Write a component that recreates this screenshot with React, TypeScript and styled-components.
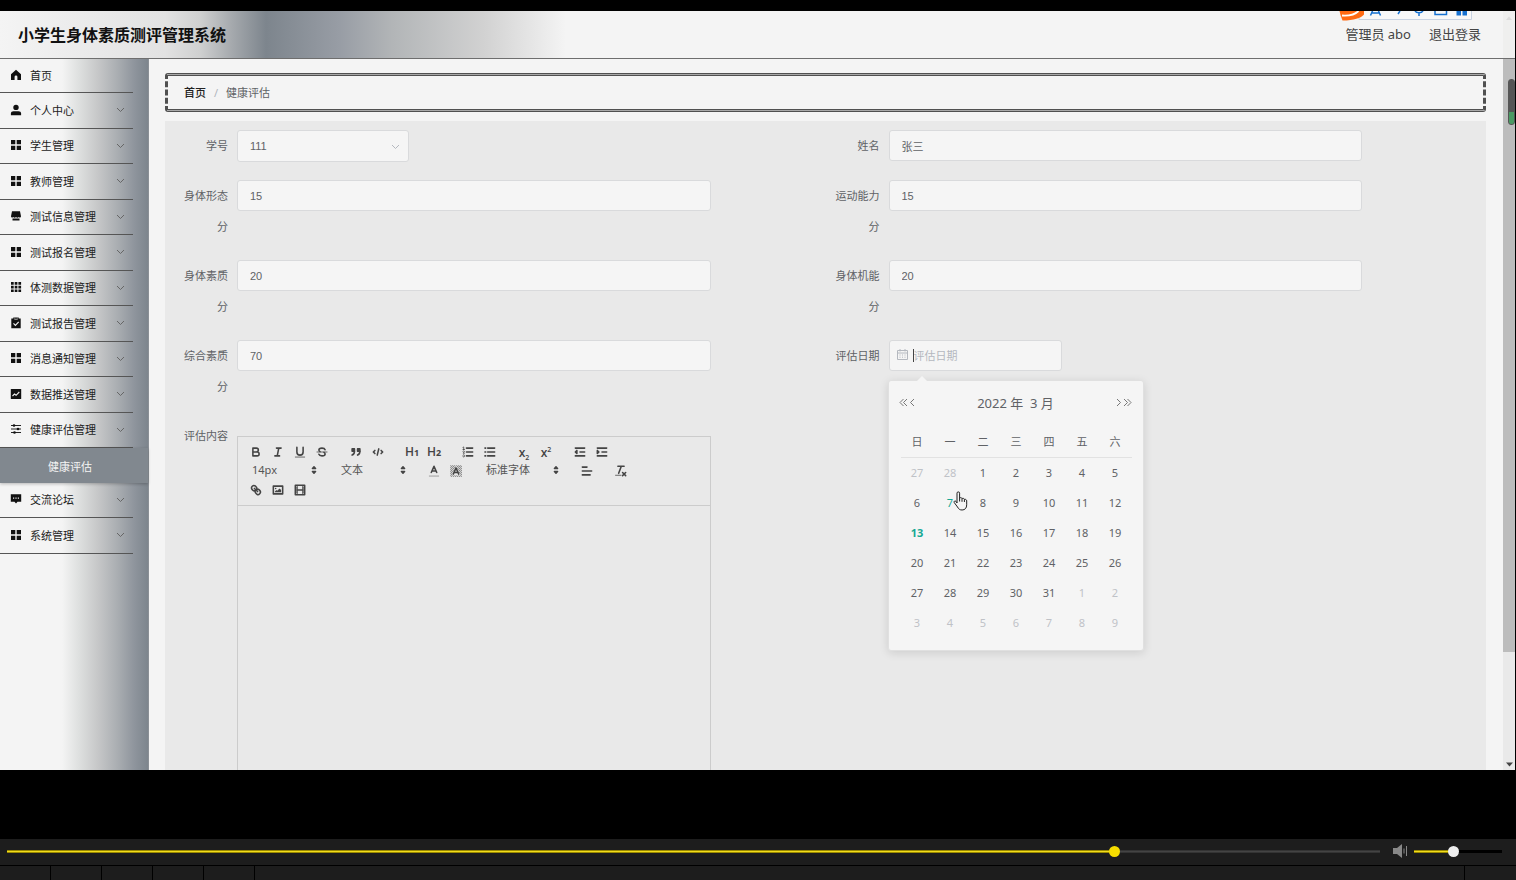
import React from "react";
import styled, { createGlobalStyle, css } from "styled-components";

const sans = `"Noto Sans", "Noto Sans CJK SC", sans-serif`;
const arial = `"Liberation Sans", "Noto Sans CJK SC", sans-serif`;

const Global = createGlobalStyle`
  *, *::before, *::after { box-sizing: border-box; }
  body { margin: 0; background: #000; font-family: ${sans}; font-size: 11px; color: #606266; }
  button, input, select { font: inherit; color: inherit; margin: 0; }
  ul { list-style: none; margin: 0; padding: 0; }
`;

const Page = styled.div`
  height: 100vh;
  display: flex;
  flex-direction: column;
  padding-top: 11px;
  background: #000;
`;

const Screen = styled.div`
  position: relative;
  flex: 1;
  min-height: 0;
  margin: 0 1px 69px 0;
  display: flex;
  flex-direction: column;
  overflow: hidden;
  background: #f4f4f4;
`;

/* ---------- header ---------- */

const Header = styled.header`
  height: 48px;
  flex: none;
  display: flex;
  align-items: center;
  justify-content: space-between;
  padding: 0 34px 2px 18px;
  border-bottom: 1px solid #6e6e6e;
  background: linear-gradient(
    to right,
    #f4f4f4 0,
    #e2e2e2 165px,
    #cfd0d0 200px,
    #a5a9ad 232px,
    #7d858d 266px,
    #989da5 340px,
    #b2b5b7 392px,
    #d2d2d2 485px,
    #f4f4f4 566px
  );
`;

const Title = styled.h1`
  margin: 0;
  font-size: 16px;
  font-weight: 700;
  color: #111;
`;

const UserNav = styled.nav`
  display: flex;
  gap: 18px;
  font-size: 13px;
  color: #444;
  a { color: inherit; text-decoration: none; }
`;

const ImeBar = styled.svg`
  position: absolute;
  top: 0;
  right: 42px;
`;

const RailTop = styled.svg`
  position: absolute;
  top: 0;
  right: 0;
`;

/* ---------- sidebar ---------- */

const Body = styled.div`
  flex: 1;
  min-height: 0;
  display: flex;
`;

const Sidebar = styled.aside`
  width: 149px;
  flex: none;
  border-right: 1px solid #8b9096;
  background: linear-gradient(
    to right,
    #f4f4f4 62px,
    #dfe1e0 78px,
    #c6c7c8 98px,
    #a9adb1 118px,
    #8f959d 134px,
    #7d858d 148px
  );
`;

const MenuItem = styled.li`
  height: 36px;
  width: 133px;
  border-bottom: 1px solid #555;
  &:nth-child(odd) { height: 35px; }
  &:first-child { height: 34px; }
`;

const MenuButton = styled.button`
  width: 100%;
  height: 100%;
  display: flex;
  align-items: center;
  gap: 8px;
  padding: 0 8px 2px 10px;
  border: 0;
  background: none;
  color: #222;
  text-align: left;
  span { flex: 1; white-space: nowrap; }
`;

const SubItem = styled.li`
  height: 35px;
  display: flex;
  align-items: center;
  padding-left: 48px;
  background: #81888f;
  box-shadow: 0 1px 3px rgba(0, 0, 0, 0.25);
  a { color: #f4f4f4; text-decoration: none; }
`;

/* ---------- content ---------- */

const Main = styled.main`
  flex: 1;
  min-width: 0;
  padding: 14px 17px 0 16px;
  display: flex;
  flex-direction: column;
  gap: 9px;
`;

const Crumbs = styled.nav`
  height: 39px;
  flex: none;
  display: flex;
  align-items: center;
  gap: 8px;
  padding: 0 16px 1px;
  border: 3px #505050;
  border-style: double dashed;
  border-radius: 3px;
  background:
    linear-gradient(#a8a8a8, #a8a8a8) top / 100% 3px no-repeat border-box,
    linear-gradient(#a8a8a8, #a8a8a8) bottom / 100% 3px no-repeat border-box;
  a { color: #222; font-weight: 500; text-decoration: none; }
  i { font-style: normal; color: #b0b4bc; }
`;

const Panel = styled.form`
  flex: 1;
  min-height: 0;
  display: grid;
  grid-template-columns: 1fr 1fr;
  align-content: start;
  row-gap: 18px;
  padding: 9px 9px 0;
  background: #e9e9e9;
`;

const Field = styled.div`
  position: relative;
  display: flex;
  align-items: flex-start;
  padding-right: 115px;
`;

const Label = styled.label`
  width: 63px;
  flex: none;
  padding-right: 9px;
  text-align: right;
  line-height: 31px;
`;

const box = css`
  height: 31px;
  border: 1px solid #d9dadc;
  border-radius: 3px;
  background: #f5f5f5;
  font-family: ${arial};
  outline: none;
`;

const TextInput = styled.input`
  ${box}
  flex: 1;
  min-width: 0;
  padding: 0 12px;
`;

const SelectWrap = styled.div`
  position: relative;
  width: 172px;
  select {
    ${box}
    height: 32px;
    width: 100%;
    padding: 0 12px;
    appearance: none;
  }
  svg { position: absolute; right: 9px; top: 12px; }
`;

const DateWrap = styled.div`
  position: relative;
  width: 173px;
  input {
    ${box}
    width: 100%;
    padding: 0 0 0 24px;
  }
  input::placeholder { color: #b4b8bf; opacity: 1; }
  > svg { position: absolute; left: 8px; top: 9px; }
`;

const Caret = styled.span`
  position: absolute;
  left: 24px;
  top: 9px;
  width: 1px;
  height: 13px;
  background: #444;
`;

/* ---------- calendar ---------- */

const Popup = styled.div`
  position: absolute;
  z-index: 2;
  left: -1px;
  top: 40px;
  width: 256px;
  height: 271px;
  padding: 0 12px;
  border: 1px solid #e0e0e0;
  border-radius: 3px;
  background: #f5f5f5;
  box-shadow: 0 2px 10px rgba(0, 0, 0, 0.12);
  &::before {
    content: "";
    position: absolute;
    left: 28px;
    top: -5px;
    border: 5px solid transparent;
    border-top: 0;
    border-bottom-color: #f5f5f5;
  }
`;

const CalHead = styled.div`
  height: 44px;
  display: flex;
  align-items: center;
  justify-content: space-between;
  padding-bottom: 2px;
  margin: 0 -2px;
  strong { font-size: 13px; font-weight: 400; white-space: pre; }
  div { display: flex; height: 20px; }
`;

const NavButton = styled.button`
  width: 9px;
  padding: 0;
  border: 0;
  background: none;
  display: grid;
  place-items: center;
`;

const CalTable = styled.table`
  width: 231px;
  table-layout: fixed;
  border-collapse: collapse;
  text-align: center;
  th { height: 32px; padding: 0; font-weight: 400; border-bottom: 1px solid #e2e2e2; }
`;

const Day = styled.td<{ $kind: "muted" | "hover" | "today" | "plain" }>`
  height: 30px;
  padding: 0;
  color: ${(p) => (p.$kind === "muted" ? "#bfc2c7" : p.$kind === "plain" ? "#606266" : "#16a893")};
  font-weight: ${(p) => (p.$kind === "today" ? 700 : 400)};
`;

const Hand = styled.svg`
  position: absolute;
  left: 64px;
  top: 110px;
`;

/* ---------- editor ---------- */

const Editor = styled.div`
  flex: 1;
  min-width: 0;
  margin-top: 16px;
  height: 480px;
  border: 1px solid #ccc;
`;

const Toolbar = styled.div`
  padding: 5px 7px 6px;
  border-bottom: 1px solid #ccc;
`;

const ToolRow = styled.div`
  display: flex;
  gap: 12px;
  height: 19px;
`;

const Group = styled.div`
  display: flex;
`;

const Tool = styled.button`
  width: 22px;
  height: 19px;
  padding: 0;
  border: 0;
  background: none;
  display: flex;
  align-items: center;
  justify-content: center;
  color: #444;
`;

const Glyph = styled.span`
  padding-top: 2px;
  font: 600 12px/14px "Open Sans", sans-serif;
  color: #444;
  small { font-size: 9px; font-weight: 700; }
  sub, sup { font-size: 7px; line-height: 0; }
`;

const Picker = styled.div<{ $w: number }>`
  position: relative;
  width: ${(p) => p.$w}px;
  select {
    width: 100%;
    height: 17px;
    padding: 0 7px;
    border: 0;
    background: none;
    appearance: none;
    color: #555;
  }
  svg { position: absolute; right: 1px; top: 2px; pointer-events: none; }
`;

/* ---------- scrollbar ---------- */

const ScrollRail = styled.div`
  position: relative;
  width: 12px;
  flex: none;
  display: flex;
  flex-direction: column;
  background: #e9e9e9;
`;

const ScrollThumb = styled.div`
  height: 593px;
  background: #bcbcbc;
`;

const ScrollArrow = styled.svg`
  margin: auto auto 3px;
`;

const Meter = styled.div`
  position: absolute;
  right: 0;
  top: 20px;
  width: 7px;
  height: 46px;
  border: 1px solid #555;
  border-radius: 3px;
  background: linear-gradient(#555 32px, #4b9a63 32px);
`;

/* ---------- player ---------- */

const Player = styled.footer`
  flex: none;
  background: #1d1d1d;
`;

const PlayerRow = styled.div`
  height: 26px;
  display: flex;
  align-items: center;
  padding: 0 14px 2px 7px;
`;

const Range = styled.input<{ $fill: string; $thumb: string; $rest: string }>`
  appearance: none;
  height: 12px;
  min-width: 0;
  background: none;
  &::-webkit-slider-runnable-track {
    height: 3px;
    background:
      linear-gradient(#9b8a00 1px, #f2dc1c 1px 2px, #9b8a00 2px) 0 0 / ${(p) => p.$fill} 100% no-repeat,
      ${(p) => p.$rest};
  }
  &::-webkit-slider-thumb {
    appearance: none;
    width: 11px;
    height: 11px;
    margin-top: -4px;
    border-radius: 50%;
    background: ${(p) => p.$thumb};
  }
`;

const Progress = styled(Range)`
  flex: 1;
`;

const Volume = styled(Range)`
  width: 88px;
`;

const Speaker = styled.svg`
  margin: 0 6px 0 13px;
`;

const Segments = styled.div`
  height: 15px;
  display: flex;
  border-top: 1px solid #000;
`;

const Segment = styled.div<{ $grow?: boolean }>`
  width: 51px;
  ${(p) => p.$grow && "flex: 1;"}
  border-right: 1px solid #000;
  &:last-child { border-right: 0; }
`;

/* ---------- icons ---------- */

const menuIcons: Record<string, React.ReactNode> = {
  home: <path d="M6 .8 1 5.2V11h3.600V7.800a1.400 1.400 0 0 1 2.800 0V11H11V5.200z" />,
  user: <><circle cx="6" cy="3.400" r="2.700" /><path d="M.9 11.200V9.600C.9 8 2 7.200 3.500 7.200h5C10 7.200 11.100 8 11.100 9.600v1.600z" /></>,
  menu: <path d="M1 1h4.300v4.300H1zM6.700 1H11v4.300H6.700zM1 6.700h4.300V11H1zM6.700 6.700H11V11H6.700z" />,
  shop: <path d="M2 1.200h8l1 5c0 1.300-1.500 1.800-2.200.8-.6 1-2.200 1-2.800 0-.6 1-2.200 1-2.800 0C2.500 8 1 7.500 1 6.200zM2.500 8.600h7v1.800h-7z" />,
  grid: <path d="M1 1h2.700v2.700H1zM4.700 1h2.700v2.700H4.700zM8.400 1h2.700v2.700H8.400zM1 4.700h2.700v2.700H1zM4.700 4.700h2.700v2.700H4.700zM8.400 4.700h2.700v2.700H8.400zM1 8.400h2.700v2.700H1zM4.700 8.400h2.700v2.700H4.700zM8.400 8.400h2.700v2.700H8.400z" />,
  claim: <><path d="M1.300 1.600h2V.6h1v2h3.400v-2h1v1h2V11.300H1.300z" /><path d="M4.300.5h3.400v1.300H4.300z" /><path d="m3.500 6.400 1.900 1.900 3.300-3.500" fill="none" stroke="#eee" strokeWidth="1.200" /></>,
  chart: <><rect x=".8" y="1" width="10.400" height="10" rx=".5" /><path d="m2.500 8 2-2 1.600 1.300 3.200-3.300" fill="none" stroke="#eee" strokeWidth="1.100" /></>,
  sliders: <><path d="M1 2.500h10M1 6h10M1 9.500h10" stroke="#222" fill="none" /><circle cx="4" cy="2.500" r="1.300" /><circle cx="8" cy="6" r="1.300" /><circle cx="4.500" cy="9.500" r="1.300" /></>,
  comment: <><path d="M.8 1.200h10.400v7.600H7.500L6 10.600 4.500 8.800H.8z" /><path d="M3 4.600h1.200v1.200H3zM5.400 4.600h1.200v1.200H5.400zM7.800 4.600H9v1.200H7.800z" fill="#eee" /></>,
};

const MenuIcon = ({ name }: { name: string }) => (
  <svg width="12" height="12" viewBox="0 0 12 12" fill="#111">{menuIcons[name]}</svg>
);

const Chevron = ({ color = "#666" }: { color?: string }) => (
  <svg width="9" height="9" viewBox="0 0 9 9" fill="none" stroke={color}><path d="m1 3 3.500 3.500L8 3" /></svg>
);

const toolIcons: Record<string, React.ReactNode> = {
  bold: <path d="M5 4h4.500a2.500 2.500 0 0 1 0 5H5zM5 9h5.500a2.500 2.500 0 0 1 0 5H5z" />,
  italic: <path d="M7 4h6M5 14h6M8 14l2-10" />,
  underline: <><path d="M5 3v6a4 4 0 0 0 8 0V3" /><path d="M3 15.500h12" strokeWidth="1" /></>,
  strike: <><path d="M2.500 9h13" strokeWidth="1" /><path d="M13 6C12.600 4.800 11 4 9 4 6.800 4 5 5 5 6.500c0 1 .5 1.500 1.500 2M5 12c.4 1.200 2 2 4 2 2.200 0 4-1 4-2.500 0-1-.5-1.500-1.500-2" /></>,
  quote: <><path d="M4 5h3v3H4zM11 5h3v3h-3z" fill="#444" /><path d="M7 8c0 4-3 5-3 5M14 8c0 4-3 5-3 5" /></>,
  code: <path d="M5 7 3 9l2 2M13 7l2 2-2 2M10 5 8 13" />,
  ordered: <><path d="M7 4h8M7 9h8M7 14h8" /><path d="m2.500 3 1-.5V6M2.500 5.800h2M4.500 10.500h-2c0-.3 1.900-1.100 1.900-2.200a1 1 0 0 0-1.900-.2M2.500 14.800a1 1 0 0 0 1.900-.1.700.700 0 0 0-.6-.7.700.700 0 0 0 .6-.7 1 1 0 0 0-1.900-.2" strokeWidth="1" /></>,
  bullet: <path d="M6 4h9M6 9h9M6 14h9M2.500 4h1M2.500 9h1M2.500 14h1" />,
  outdent: <><path d="M3 4h12M9 9h6M3 14h12" /><path d="M5 7v4L3 9z" fill="#444" /></>,
  indent: <><path d="M3 4h12M9 9h6M3 14h12" /><path d="M3 7v4l2-2z" fill="#444" /></>,
  color: <><path d="M3 15.500h12" stroke="#888" strokeWidth="1" /><path d="M5.500 11 9 3l3.500 8M11.600 9H6.400" /></>,
  background: (
    <>
      <defs>
        <pattern id="dots" width="2.600" height="2.600" patternUnits="userSpaceOnUse">
          <path d="M0 0h1.300v1.300H0zM1.300 1.300h1.300v1.300H1.300z" fill="#777" stroke="none" />
        </pattern>
      </defs>
      <path d="M1.500 1.500h15v15h-15z" fill="url(#dots)" stroke="none" />
      <path d="M9 2 3.500 14.500h11z" fill="#e9e9e9" stroke="none" />
      <path d="M5.500 13 9 5l3.500 8M11.600 11H6.400" />
    </>
  ),
  align: <path d="M3 4h6M3 9h12M3 14h10" />,
  clean: <><path d="M5 3h8M6 12l3.400-9M11 11l4 4M15 11l-4 4" /><path d="M2 14.500h7" strokeWidth="1" /></>,
  link: <><path d="m7 7 4 4" /><path d="M8.900 4.577a3.476 3.476 0 0 1 .36 4.679A3.476 3.476 0 0 1 4.577 8.900C3.185 7.500 2.035 6.400 4.217 4.217S7.500 3.185 8.900 4.577zM13.423 9.100a3.476 3.476 0 0 0-4.679-.36 3.476 3.476 0 0 0 .36 4.679c1.392 1.392 2.500 2.542 4.679.36S14.815 10.500 13.423 9.100z" /></>,
  image: <><path d="M3 4h12v10H3z" /><circle cx="6" cy="7" r="1" fill="#444" stroke="none" /><path d="M5 12v-1l2-2 1 1 3-3 2 2v3z" fill="#444" stroke="none" /></>,
  video: <><path d="M3 3h12v12H3z" /><path d="M5.500 3v12M12.500 3v12M3 5.500h2.500M3 7.500h2.500M3 10.500h2.500M3 12.500h2.500M12.500 5.500H15M12.500 7.500H15M12.500 10.500H15M12.500 12.500H15" strokeWidth="1" /><path d="M5 9h8" /></>,
};

const ToolButton = ({ name, label }: { name: string; label: string }) => (
  <Tool type="button" aria-label={label}>
    <svg width="14" height="14" viewBox="0 0 18 18" fill="none" stroke="#444" strokeWidth="2" strokeLinecap="round" strokeLinejoin="round">
      {toolIcons[name]}
    </svg>
  </Tool>
);

const ToolPicker = ({ value, label, w }: { value: string; label: string; w: number }) => (
  <Picker $w={w}>
    <select aria-label={label}><option>{value}</option></select>
    <svg width="14" height="14" viewBox="0 0 18 18" fill="#444" stroke="#444" strokeWidth="2" strokeLinejoin="round">
      <path d="m7 11 2 2 2-2zM7 7l2-2 2 2z" />
    </svg>
  </Picker>
);

/* ---------- data ---------- */

const menuTop = [
  ["home", "首页"],
  ["user", "个人中心"],
  ["menu", "学生管理"],
  ["menu", "教师管理"],
  ["shop", "测试信息管理"],
  ["menu", "测试报名管理"],
  ["grid", "体测数据管理"],
  ["claim", "测试报告管理"],
  ["menu", "消息通知管理"],
  ["chart", "数据推送管理"],
  ["sliders", "健康评估管理"],
];
const menuBottom = [
  ["comment", "交流论坛"],
  ["menu", "系统管理"],
];

const weekdays = ["日", "一", "二", "三", "四", "五", "六"];
const days = Array.from({ length: 42 }, (_, i) => {
  if (i < 2) return { n: 27 + i, kind: "muted" as const };
  if (i > 32) return { n: i - 32, kind: "muted" as const };
  const n = i - 1;
  return { n, kind: n === 7 ? ("hover" as const) : n === 13 ? ("today" as const) : ("plain" as const) };
});

const Entry = ({ icon, text }: { icon: string; text: string }) => (
  <MenuItem>
    <MenuButton type="button">
      <MenuIcon name={icon} />
      <span>{text}</span>
      {icon !== "home" && <Chevron />}
    </MenuButton>
  </MenuItem>
);

const TextField = ({ id, label, value }: { id: string; label: string; value: string }) => (
  <Field>
    <Label htmlFor={id}>{label}</Label>
    <TextInput id={id} defaultValue={value} />
  </Field>
);

const Arrow = ({ d, label }: { d: string; label: string }) => (
  <NavButton type="button" aria-label={label}>
    <svg width="9" height="9" viewBox="0 0 9 9" fill="none" stroke="#777"><path d={d} /></svg>
  </NavButton>
);

const Calendar = () => (
  <Popup>
    <CalHead>
      <div>
        <Arrow label="前一年" d="M4.500 1 1 4.500 4.500 8M8 1 4.500 4.500 8 8" />
        <Arrow label="上个月" d="M6 1 2.500 4.500 6 8" />
      </div>
      <strong>{"2022 年  3 月"}</strong>
      <div>
        <Arrow label="下个月" d="m3 1 3.500 3.500L3 8" />
        <Arrow label="后一年" d="m1 1 3.500 3.500L1 8M4.500 1 8 4.500 4.500 8" />
      </div>
    </CalHead>
    <CalTable>
      <thead>
        <tr>{weekdays.map((d) => <th key={d}>{d}</th>)}</tr>
      </thead>
      <tbody>
        {[0, 1, 2, 3, 4, 5].map((r) => (
          <tr key={r}>
            {days.slice(r * 7, r * 7 + 7).map((d) => <Day key={d.n} $kind={d.kind}>{d.n}</Day>)}
          </tr>
        ))}
      </tbody>
    </CalTable>
    <Hand width="15" height="20" viewBox="0 0 15 20" fill="#f5f5f5" stroke="#222" strokeLinejoin="round">
      <path d="M4 12V2.200a1.300 1.300 0 0 1 2.600 0V7c.8-.7 2.300-.4 2.400.6.900-.6 2.200-.2 2.400.8 1-.4 2.300.2 2.300 1.400v4c0 3.200-1.700 5.200-4.600 5.200-2.300 0-3.500-1-4.600-3L1.200 11.500C.6 10.300 2 9.400 3 10.400z" />
      <path d="M6.600 7v3.500M9 7.800v3M11.400 8.500v2.500" fill="none" />
    </Hand>
  </Popup>
);

export default function App() {
  return (
    <Page>
      <Global />
      <Screen>
        <Header>
          <Title>小学生身体素质测评管理系统</Title>
          <UserNav>
            <span>管理员 abo</span>
            <a href="#logout">退出登录</a>
          </UserNav>
        </Header>
        <ImeBar width="134" height="12" viewBox="0 0 134 12" fill="none" stroke="#1570d0" strokeWidth="1.500">
          <path d="M20 0v8.500h112.500V0" fill="#f8f8f8" stroke="#c9d3e2" strokeWidth="1" />
          <path d="M.5 0h24.500v3.500C22 7 15 9.500 3.500 9.500L1.500 4z" fill="#ff6a13" stroke="none" />
          <path d="M3 4.500C10 5 16 3.500 19.500 0" stroke="#fff" strokeWidth="1.800" />
          <path d="M31.500 4.500l2-4.500M41.500 4.500l-2-4.500M32.500 2h8M59 3l2-3M76 0a4.500 3 0 0 0 8 0M80 2.500V5M96 0v3.500h11.500V0" />
          <path d="M117.500 0h4.500v4.500h-4.500zM123.500 0h4.500v4.500h-4.500z" fill="#1570d0" stroke="none" />
        </ImeBar>
        <RailTop width="12" height="47" viewBox="0 0 12 47">
          <path d="M0 0h12v47H0z" fill="#efefee" />
          <path d="M3 9h6L6 5.500z" fill="#dcdcdc" />
        </RailTop>
        <Body>
          <Sidebar>
            <ul>{menuTop.map(([icon, text]) => <Entry key={text} icon={icon} text={text} />)}
              <SubItem><a href="#assessment">健康评估</a></SubItem>
              {menuBottom.map(([icon, text]) => <Entry key={text} icon={icon} text={text} />)}
            </ul>
          </Sidebar>
          <Main>
            <Crumbs>
              <a href="#home">首页</a>
              <i>/</i>
              <span>健康评估</span>
            </Crumbs>
            <Panel>
              <Field>
                <Label htmlFor="sid">学号</Label>
                <SelectWrap>
                  <select id="sid"><option>111</option></select>
                  <Chevron color="#b4b8bf" />
                </SelectWrap>
              </Field>
              <TextField id="name" label="姓名" value="张三" />
              <TextField id="shape" label="身体形态分" value="15" />
              <TextField id="sport" label="运动能力分" value="15" />
              <TextField id="quality" label="身体素质分" value="20" />
              <TextField id="function" label="身体机能分" value="20" />
              <TextField id="overall" label="综合素质分" value="70" />
              <Field>
                <Label htmlFor="date">评估日期</Label>
                <DateWrap>
                  <input id="date" placeholder="评估日期" />
                  <svg width="11" height="11" viewBox="0 0 11 11" fill="none" stroke="#b4b8bf">
                    <path d="M.5 1.500h10v9H.5zM.5 4h10M3 0v2.500M8 0v2.500M2.500 6h1M5 6h1M7.500 6h1M2.500 8.200h1M5 8.200h1M7.500 8.200h1" />
                  </svg>
                  <Caret />
                  <Calendar />
                </DateWrap>
              </Field>
              <Field>
                <Label as="span">评估内容</Label>
                <Editor>
                  <Toolbar>
                    <ToolRow>
                      <Group>
                        <ToolButton name="bold" label="粗体" />
                        <ToolButton name="italic" label="斜体" />
                        <ToolButton name="underline" label="下划线" />
                        <ToolButton name="strike" label="删除线" />
                      </Group>
                      <Group>
                        <ToolButton name="quote" label="引用" />
                        <ToolButton name="code" label="代码" />
                      </Group>
                      <Group>
                        <Tool type="button"><Glyph>H<small>1</small></Glyph></Tool>
                        <Tool type="button"><Glyph>H<small>2</small></Glyph></Tool>
                      </Group>
                      <Group>
                        <ToolButton name="ordered" label="有序列表" />
                        <ToolButton name="bullet" label="无序列表" />
                      </Group>
                      <Group>
                        <Tool type="button"><Glyph>x<sub>2</sub></Glyph></Tool>
                        <Tool type="button"><Glyph>x<sup>2</sup></Glyph></Tool>
                      </Group>
                      <Group>
                        <ToolButton name="outdent" label="减少缩进" />
                        <ToolButton name="indent" label="增加缩进" />
                      </Group>
                    </ToolRow>
                    <ToolRow>
                      <ToolPicker value="14px" label="字号" w={77} />
                      <ToolPicker value="文本" label="标题" w={77} />
                      <Group>
                        <ToolButton name="color" label="文字颜色" />
                        <ToolButton name="background" label="背景颜色" />
                      </Group>
                      <ToolPicker value="标准字体" label="字体" w={85} />
                      <ToolButton name="align" label="对齐" />
                      <ToolButton name="clean" label="清除格式" />
                    </ToolRow>
                    <ToolRow>
                      <Group>
                        <ToolButton name="link" label="链接" />
                        <ToolButton name="image" label="图片" />
                        <ToolButton name="video" label="视频" />
                      </Group>
                    </ToolRow>
                  </Toolbar>
                </Editor>
              </Field>
            </Panel>
          </Main>
          <ScrollRail>
            <ScrollThumb />
            <Meter />
            <ScrollArrow width="7" height="5" viewBox="0 0 7 5" fill="#444"><path d="M0 .5h7L3.500 4.500z" /></ScrollArrow>
          </ScrollRail>
        </Body>
      </Screen>
      <Player>
        <PlayerRow>
          <Progress type="range" aria-label="播放进度" min="0" max="1000" defaultValue="809" $fill="80.9%" $thumb="#f6dd00" $rest="linear-gradient(#2c2c2c, #444, #2c2c2c)" />
          <Speaker width="15" height="14" viewBox="0 0 15 14" fill="#888">
            <path d="M0 4h4l5-4v14l-5-4H0z" />
            <path d="M10.500 4.500h1v5h-1zM13 2h1v10h-1z" />
          </Speaker>
          <Volume type="range" aria-label="音量" min="0" max="1000" defaultValue="445" $fill="44%" $thumb="#eee" $rest="#000" />
        </PlayerRow>
        <Segments>
          <Segment /><Segment /><Segment /><Segment /><Segment /><Segment $grow /><Segment />
        </Segments>
      </Player>
    </Page>
  );
}
